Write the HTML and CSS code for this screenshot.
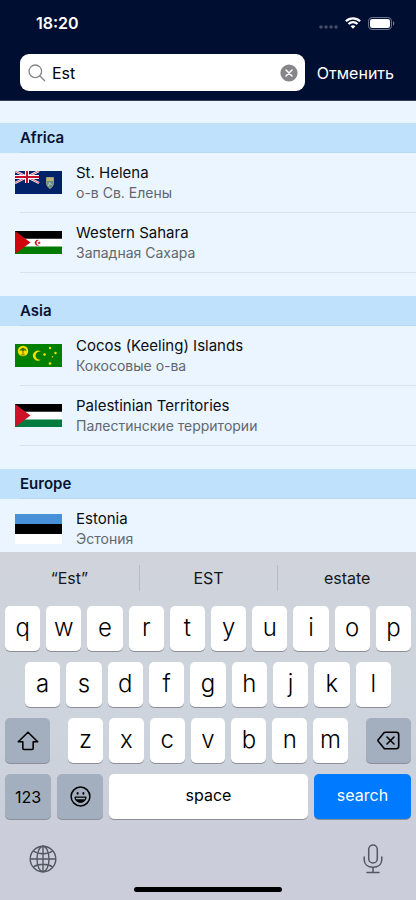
FILE: index.html
```html
<!DOCTYPE html>
<html lang="ru">
<head>
<meta charset="utf-8">
<meta name="viewport" content="width=device-width, initial-scale=1">
<title>Est</title>
<link rel="stylesheet" href="styles.css">
</head>
<body>
<div class="app">
  <header class="top">
    <div class="status">
      <time class="clock">18:20</time>
      <div class="indicators">
        <svg width="19" height="4" viewBox="0 0 19 4" fill="#434c66" aria-hidden="true"><circle cx="2" cy="2" r="1.8"/><circle cx="7" cy="2" r="1.8"/><circle cx="12" cy="2" r="1.8"/><circle cx="17" cy="2" r="1.8"/></svg>
        <svg class="wifi" width="16" height="12" viewBox="0 0 16 12" fill="none" stroke="#fff" stroke-width="2.2" aria-hidden="true"><path d="M.9 4.200a10.200 10.200 0 0 1 14.200 0M3.500 7a6.500 6.500 0 0 1 9 0"/><path d="M8 11.700 5.600 9.300a3.500 3.500 0 0 1 4.800 0z" fill="#fff" stroke="none"/></svg>
        <svg width="27" height="13" viewBox="0 0 27 13" aria-hidden="true"><rect x=".5" y=".5" width="23" height="12" rx="3.600" fill="none" stroke="#70778c"/><rect x="2" y="2" width="20" height="9" rx="2.200" fill="#fff"/><path d="M25 4.300c1.800.6 1.800 3.800 0 4.400z" fill="#70778c"/></svg>
      </div>
    </div>
    <form class="search">
      <div class="field">
        <svg width="18" height="18" viewBox="0 0 18 18" fill="none" stroke="#85858a" stroke-width="1.300" stroke-linecap="round" aria-hidden="true"><circle cx="7.300" cy="7.300" r="6.300"/><path d="m12 12 4.700 4.700"/></svg>
        <input class="query" type="text" value="Est" aria-label="Поиск">
        <button class="clear" type="button" aria-label="Очистить"><svg width="18" height="18" viewBox="0 0 18 18"><circle cx="9" cy="9" r="8.600" fill="#85858a"/><path d="m6 6 6 6m0-6-6 6" stroke="#fff" stroke-width="1.500" stroke-linecap="round"/></svg></button>
      </div>
      <button class="cancel" type="button">Отменить</button>
    </form>
  </header>

  <main class="results">
    <section class="group">
      <header class="group-head"><h2 class="group-title">Africa</h2></header>
      <ul class="rows">
        <li class="row">
          <svg class="flag" width="47" height="23" viewBox="0 0 47 23" aria-hidden="true"><rect width="47" height="23" fill="#012169"/><path d="m0 0 24 12M24 0 0 12" stroke="#fff" stroke-width="2.400"/><path d="m0 0 24 12M24 0 0 12" stroke="#d5455c" stroke-width=".9"/><path d="M12 0v12M0 6h24" stroke="#fff" stroke-width="4"/><path d="M12 0v12M0 6h24" stroke="#c8102e" stroke-width="2"/><path d="M31.500 6.500h7v5.500c0 3-2 4.500-3.500 5.500-1.500-1-3.500-2.500-3.500-5.500z" fill="#5f8f85" stroke="#c9bf7a" stroke-width=".7"/><path d="M32 7h6v3h-6z" fill="#b9b56c"/><path d="m33.500 15 1-3.500 2 2.500" fill="none" stroke="#ccc"/></svg>
          <div class="names"><span class="name">St. Helena</span><span class="local">о-в Св. Елены</span></div>
        </li>
        <li class="row">
          <svg class="flag" width="47" height="23" viewBox="0 0 47 23" aria-hidden="true"><rect width="47" height="23" fill="#fff"/><path d="M0 0h47v7.700H0z"/><path d="M0 15.500h47V23H0z" fill="#007a00"/><path d="m0 0 15.500 11.500L0 23z" fill="#d0050c"/><path d="M24.500 9.300a3 3 0 1 0 0 4.900 2.500 2.500 0 1 1 0-4.900zm-.3.900.5 1.100h1.200l-.9.800.3 1.200-1.100-.7-1.100.7.300-1.200-.9-.8h1.200z" fill="#d0050c"/></svg>
          <div class="names"><span class="name">Western Sahara</span><span class="local">Западная Сахара</span></div>
        </li>
      </ul>
    </section>

    <section class="group">
      <header class="group-head"><h2 class="group-title">Asia</h2></header>
      <ul class="rows">
        <li class="row">
          <svg class="flag" width="47" height="23" viewBox="0 0 47 23" aria-hidden="true"><rect width="47" height="23" fill="#008000"/><circle cx="8" cy="7" r="5.200" fill="#ffe000"/><path d="M8 6.500v4.500" stroke="#8a6d00" stroke-width="1"/><path d="M4.600 7.200c0-1.800 1-2.600 2-2.600.2-1 2.600-1 2.800 0 1 0 2 .8 2 2.600-.8-.8-1.400-1-2-.8l-1.400.8-1.400-.8c-.6-.2-1.200 0-2 .8z" fill="#3c7a00"/><path d="M5.800 11h4.400" stroke="#3c7a00" stroke-width=".8"/><path d="M26 7.600a5 5 0 1 0 0 8 4.200 4.200 0 1 1 0-8z" fill="#ffe000"/><g fill="#ffe000"><circle cx="29.500" cy="10.500" r="1.300"/><circle cx="35" cy="4" r="1.200"/><circle cx="40.500" cy="9" r="1.200"/><circle cx="37.500" cy="12.800" r=".7"/><circle cx="35" cy="19.500" r="1.300"/></g></svg>
          <div class="names"><span class="name">Cocos (Keeling) Islands</span><span class="local">Кокосовые о-ва</span></div>
        </li>
        <li class="row">
          <svg class="flag" width="47" height="23" viewBox="0 0 47 23" aria-hidden="true"><rect width="47" height="23" fill="#fff"/><path d="M0 0h47v7.700H0z"/><path d="M0 15.500h47V23H0z" fill="#007a3d"/><path d="m0 0 15.500 11.500L0 23z" fill="#ce1126"/></svg>
          <div class="names"><span class="name">Palestinian Territories</span><span class="local">Палестинские территории</span></div>
        </li>
      </ul>
    </section>

    <section class="group">
      <header class="group-head"><h2 class="group-title">Europe</h2></header>
      <ul class="rows">
        <li class="row">
          <svg class="flag" width="47" height="30" viewBox="0 0 47 30" aria-hidden="true"><rect width="47" height="30" fill="#fff"/><path d="M0 0h47v10H0z" fill="#4891d9"/><path d="M0 10h47v10H0z"/></svg>
          <div class="names"><span class="name">Estonia</span><span class="local">Эстония</span></div>
        </li>
      </ul>
    </section>
  </main>

  <div class="keyboard">
    <div class="suggestions">
      <button class="suggestion" type="button">“Est”</button>
      <button class="suggestion" type="button">EST</button>
      <button class="suggestion" type="button">estate</button>
    </div>
    <div class="keys">
      <div class="key-row">
        <button class="key" type="button">q</button><button class="key" type="button">w</button><button class="key" type="button">e</button><button class="key" type="button">r</button><button class="key" type="button">t</button><button class="key" type="button">y</button><button class="key" type="button">u</button><button class="key" type="button">i</button><button class="key" type="button">o</button><button class="key" type="button">p</button>
      </div>
      <div class="key-row inset">
        <button class="key" type="button">a</button><button class="key" type="button">s</button><button class="key" type="button">d</button><button class="key" type="button">f</button><button class="key" type="button">g</button><button class="key" type="button">h</button><button class="key" type="button">j</button><button class="key" type="button">k</button><button class="key" type="button">l</button>
      </div>
      <div class="key-row split">
        <button class="key gray" type="button" aria-label="Shift"><svg width="22" height="20" viewBox="0 0 22 20" fill="none" stroke="#000" stroke-width="1.600" stroke-linejoin="round"><path d="M11 1.200 1.300 10.800h4.500v6.400c0 .8.500 1.300 1.300 1.300h7.800c.8 0 1.300-.5 1.300-1.300v-6.400h4.500z"/></svg></button>
        <div class="letters">
          <button class="key" type="button">z</button><button class="key" type="button">x</button><button class="key" type="button">c</button><button class="key" type="button">v</button><button class="key" type="button">b</button><button class="key" type="button">n</button><button class="key" type="button">m</button>
        </div>
        <button class="key gray" type="button" aria-label="Delete"><svg width="23" height="19" viewBox="0 0 23 19" fill="none" stroke="#000" stroke-width="1.600" stroke-linejoin="round" stroke-linecap="round"><path d="M8.500 1.200h10.700a2.500 2.500 0 0 1 2.500 2.500v11.600a2.500 2.500 0 0 1-2.500 2.500H8.500c-.7 0-1.200-.2-1.700-.7L1.500 10.600c-.7-.7-.7-1.500 0-2.200l5.300-6.500c.5-.5 1-.7 1.700-.7zM10 6l7 7m0-7-7 7"/></svg></button>
      </div>
      <div class="key-row">
        <button class="key gray word mode" type="button">123</button>
        <button class="key gray mode" type="button" aria-label="Emoji"><svg width="21" height="21" viewBox="0 0 21 21"><circle cx="10.500" cy="10.500" r="9.400" fill="none" stroke="#000" stroke-width="1.500"/><ellipse cx="7.600" cy="7.400" rx="1" ry="1.400"/><ellipse cx="13.400" cy="7.400" rx="1" ry="1.400"/><path d="M4.900 11h11.200c0 3.200-2.400 5.400-5.600 5.400S4.900 14.200 4.900 11z" stroke="#000" stroke-linejoin="round"/><path d="M5.800 11.800h9.400l-.4 1.500H6.200z" fill="#a5afbe"/></svg></button>
        <button class="key word space" type="button">space</button>
        <button class="key word go" type="button">search</button>
      </div>
    </div>
    <div class="dock">
      <button class="tool" type="button" aria-label="Language"><svg width="28" height="28" viewBox="0 0 28 28" fill="none" stroke="#525761" stroke-width="1.400"><circle cx="14" cy="14" r="12.800"/><ellipse cx="14" cy="14" rx="6" ry="12.800"/><path d="M14 1.200v25.600M1.200 14h25.600M4.300 6c5 3.600 14.400 3.600 19.400 0M4.300 22c5-3.600 14.400-3.600 19.400 0"/></svg></button>
      <button class="tool" type="button" aria-label="Dictation"><svg width="20" height="30" viewBox="0 0 20 30" fill="none" stroke="#525761" stroke-width="1.500" stroke-linecap="round"><rect x="5.700" y="1" width="8.600" height="18" rx="4.300"/><path d="M1.200 13v2.500c0 4.800 3.700 7.700 8.800 7.700s8.800-2.900 8.800-7.700V13M10 23.200v5M4 28.500h12"/></svg></button>
    </div>
    <div class="home"></div>
  </div>
</div>
</body>
</html>
```
FILE: styles.css
```css
* { box-sizing: border-box; }

body {
  margin: 0;
  font-family: Inter, "Liberation Sans", sans-serif;
  font-size: 16px;
  color: #0a0d14;
}

button {
  margin: 0;
  padding: 0;
  border: 0;
  background: none;
  font: inherit;
  color: inherit;
}

svg { display: block; flex: none; }

.app {
  display: flex;
  flex-direction: column;
  height: 100vh;
  background: #ebf5ff;
}

.top {
  flex: none;
  padding-bottom: 9px;
  background: #000e31;
  border-bottom: 1px solid #363f59;
}

.status {
  display: flex;
  align-items: center;
  justify-content: space-between;
  height: 46px;
  padding: 0 21px 0 36px;
  color: #fff;
}

.clock { font-weight: 600; }

.indicators { display: flex; align-items: center; gap: 7px; }
.indicators > :first-child { margin-top: 8px; }

.search {
  display: flex;
  align-items: center;
  gap: 12px;
  margin: 8px 22px 0 20px;
}

.field {
  display: flex;
  flex: 1;
  align-items: center;
  gap: 6px;
  min-width: 0;
  height: 37px;
  padding: 0 7px 0 8px;
  border-radius: 9px;
  background: #fff;
}

.query {
  flex: 1;
  min-width: 0;
  padding: 0;
  border: 0;
  outline: 0;
  background: none;
  font: inherit;
  color: #000;
}

.cancel { color: #fff; }

.results { flex: 1; min-height: 0; overflow: hidden; }

.group { margin-top: 22px; }
.group + .group { margin-top: 23px; }

.group-head { padding-left: 20px; background: #c0e1fc; }

.group-title {
  height: 30px;
  margin: 0;
  border-bottom: 1px solid #b9d9f3;
  font-size: 15px;
  font-weight: 600;
  line-height: 30px;
  color: #061233;
}

.rows { margin: 0; padding: 0 0 0 20px; list-style: none; }

.row {
  display: flex;
  align-items: center;
  gap: 14px;
  height: 60px;
  border-bottom: 1px solid #d7e2ee;
}

.flag { margin-left: -5px; }

.names { display: flex; flex-direction: column; }
.name { font-size: 15px; line-height: 20px; }
.local { font-size: 14px; line-height: 20px; color: #62676e; }

.keyboard {
  flex: none;
  padding-bottom: 8px;
  background: linear-gradient(#d0d3da, #cdd4dd 50%, #cbceda 80%);
}

.suggestions {
  display: grid;
  grid-template-columns: repeat(3, 1fr);
  align-items: center;
  height: 52px;
  margin-bottom: 2px;
}

.suggestion { height: 26px; color: #15171b; }
.suggestion + .suggestion { border-left: 1px solid #b8bcc4; }

.keys { display: grid; gap: 11px; padding: 0 5px; }

.key-row { display: flex; gap: 6px; }
.inset { padding: 0 20px; }
.split { gap: 18px; }
.letters { display: flex; flex: 1; gap: 6px; }

.key {
  display: flex;
  flex: 1;
  align-items: center;
  justify-content: center;
  min-width: 0;
  height: 45px;
  padding-bottom: 3px;
  border-radius: 5px;
  background: #fff;
  box-shadow: 0 1px 0 #8b8f96;
  font-size: 24px;
  font-weight: 300;
  color: #000;
}

.gray { flex: none; width: 45px; padding-bottom: 0; background: #a3afbf; }
.mode { width: 46px; }
.word { font-size: 16px; font-weight: 400; }
.space { flex: 1; }
.go { flex: none; width: 97px; background: #007aff; color: #fff; }

.dock {
  display: flex;
  align-items: center;
  justify-content: space-between;
  height: 30px;
  margin: 25px 33px 13px 29px;
}

.home {
  width: 148px;
  height: 5px;
  margin: 0 auto;
  border-radius: 3px;
  background: #000;
}
```
